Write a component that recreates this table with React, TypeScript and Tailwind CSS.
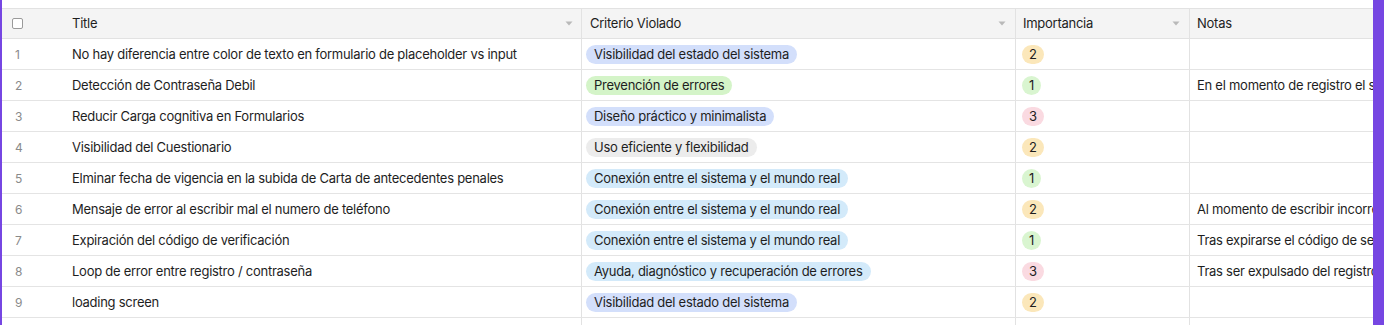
type Tone = "blue" | "green" | "sky" | "gray";

const tones: Record<Tone, string> = {
  blue: "bg-[#d3dffb]",
  green: "bg-[#d4f4c8]",
  sky: "bg-[#d3eafa]",
  gray: "bg-[#ececec]",
};

const levels: Record<number, string> = {
  1: "bg-[#d9f5d0]",
  2: "bg-[#fbe7ba]",
  3: "bg-[#fadae1]",
};

const rows: { title: string; criterio: string; tone: Tone; imp: number; notas: string }[] = [
  { title: "No hay diferencia entre color de texto en formulario de placeholder vs input", criterio: "Visibilidad del estado del sistema", tone: "blue", imp: 2, notas: "" },
  { title: "Detección de Contraseña Debil", criterio: "Prevención de errores", tone: "green", imp: 1, notas: "En el momento de registro el sistema no indica" },
  { title: "Reducir Carga cognitiva en Formularios", criterio: "Diseño práctico y minimalista", tone: "blue", imp: 3, notas: "" },
  { title: "Visibilidad del Cuestionario", criterio: "Uso eficiente y flexibilidad", tone: "gray", imp: 2, notas: "" },
  { title: "Elminar fecha de vigencia en la subida de Carta de antecedentes penales", criterio: "Conexión entre el sistema y el mundo real", tone: "sky", imp: 1, notas: "" },
  { title: "Mensaje de error al escribir mal el numero de teléfono", criterio: "Conexión entre el sistema y el mundo real", tone: "sky", imp: 2, notas: "Al momento de escribir incorrectamente" },
  { title: "Expiración del código de verificación", criterio: "Conexión entre el sistema y el mundo real", tone: "sky", imp: 1, notas: "Tras expirarse el código de seguridad" },
  { title: "Loop de error entre registro / contraseña", criterio: "Ayuda, diagnóstico y recuperación de errores", tone: "sky", imp: 3, notas: "Tras ser expulsado del registro" },
  { title: "loading screen", criterio: "Visibilidad del estado del sistema", tone: "blue", imp: 2, notas: "" },
];

const grid = "grid grid-cols-[58px_522px_434px_174px_400px]";

function Caret() {
  return (
    <svg width="8" height="5" viewBox="0 0 8 5" className="shrink-0">
      <path d="M0.5 0.5 L7.5 0.5 L4 4.5 Z" fill="#b9b9b9" />
    </svg>
  );
}

export default function App() {
  return (
    <div
      className="flex h-[325px] w-full overflow-hidden bg-white text-[13px] tracking-[-0.26px] text-[#1e1e1e]"
      style={{ fontFamily: "Inter, 'Liberation Sans', sans-serif" }}
    >
      <div className="w-[2px] shrink-0 bg-[#7646e2]" />
      <div className="min-w-0 flex-1 overflow-hidden pt-2">
        <div className={`${grid} h-[31px] border-y border-[#e2e2e2] bg-[#f4f4f4]`}>
          <div className="flex items-center pl-[10px]">
            <div className="h-[11px] w-[11px] rounded-[2px] border border-[#9a9a9a] bg-white" />
          </div>
          <div className="flex items-center justify-between border-r border-[#e2e2e2] pl-[12px] pr-[8px]">
            <span>Title</span>
            <Caret />
          </div>
          <div className="flex items-center justify-between border-r border-[#e2e2e2] pl-[8px] pr-[9px]">
            <span>Criterio Violado</span>
            <Caret />
          </div>
          <div className="flex items-center justify-between border-r border-[#e2e2e2] pl-[7px] pr-[9px]">
            <span>Importancia</span>
            <Caret />
          </div>
          <div className="flex items-center pl-[7px]">
            <span>Notas</span>
          </div>
        </div>
        {rows.map((r, i) => (
          <div key={i} className={`${grid} h-[31px] border-b border-[#e4e4e4]`}>
            <div className="flex items-center pl-[13px] pt-[1px] text-[12px] text-[#8a8a8a]">{i + 1}</div>
            <div className="flex items-center overflow-hidden whitespace-nowrap border-r border-[#e2e2e2] pl-[12px] pt-[1px]">
              {r.title}
            </div>
            <div className="flex items-center border-r border-[#e2e2e2] pl-[4px]">
              <span className={`rounded-full px-[8px] leading-[19px] ${tones[r.tone]}`}>{r.criterio}</span>
            </div>
            <div className="flex items-center border-r border-[#e2e2e2] pl-[6px]">
              <span className={`rounded-full px-[7px] leading-[19px] ${levels[r.imp]}`}>{r.imp}</span>
            </div>
            <div className="flex items-center overflow-hidden whitespace-nowrap pl-[7px] pt-[1px]">{r.notas}</div>
          </div>
        ))}
        <div className={`${grid} h-[31px]`}>
          <div />
          <div className="border-r border-[#e2e2e2]" />
          <div className="border-r border-[#e2e2e2]" />
          <div className="border-r border-[#e2e2e2]" />
          <div />
        </div>
      </div>
      <div className="w-[11px] shrink-0 bg-[#7646e2]" />
    </div>
  );
}
